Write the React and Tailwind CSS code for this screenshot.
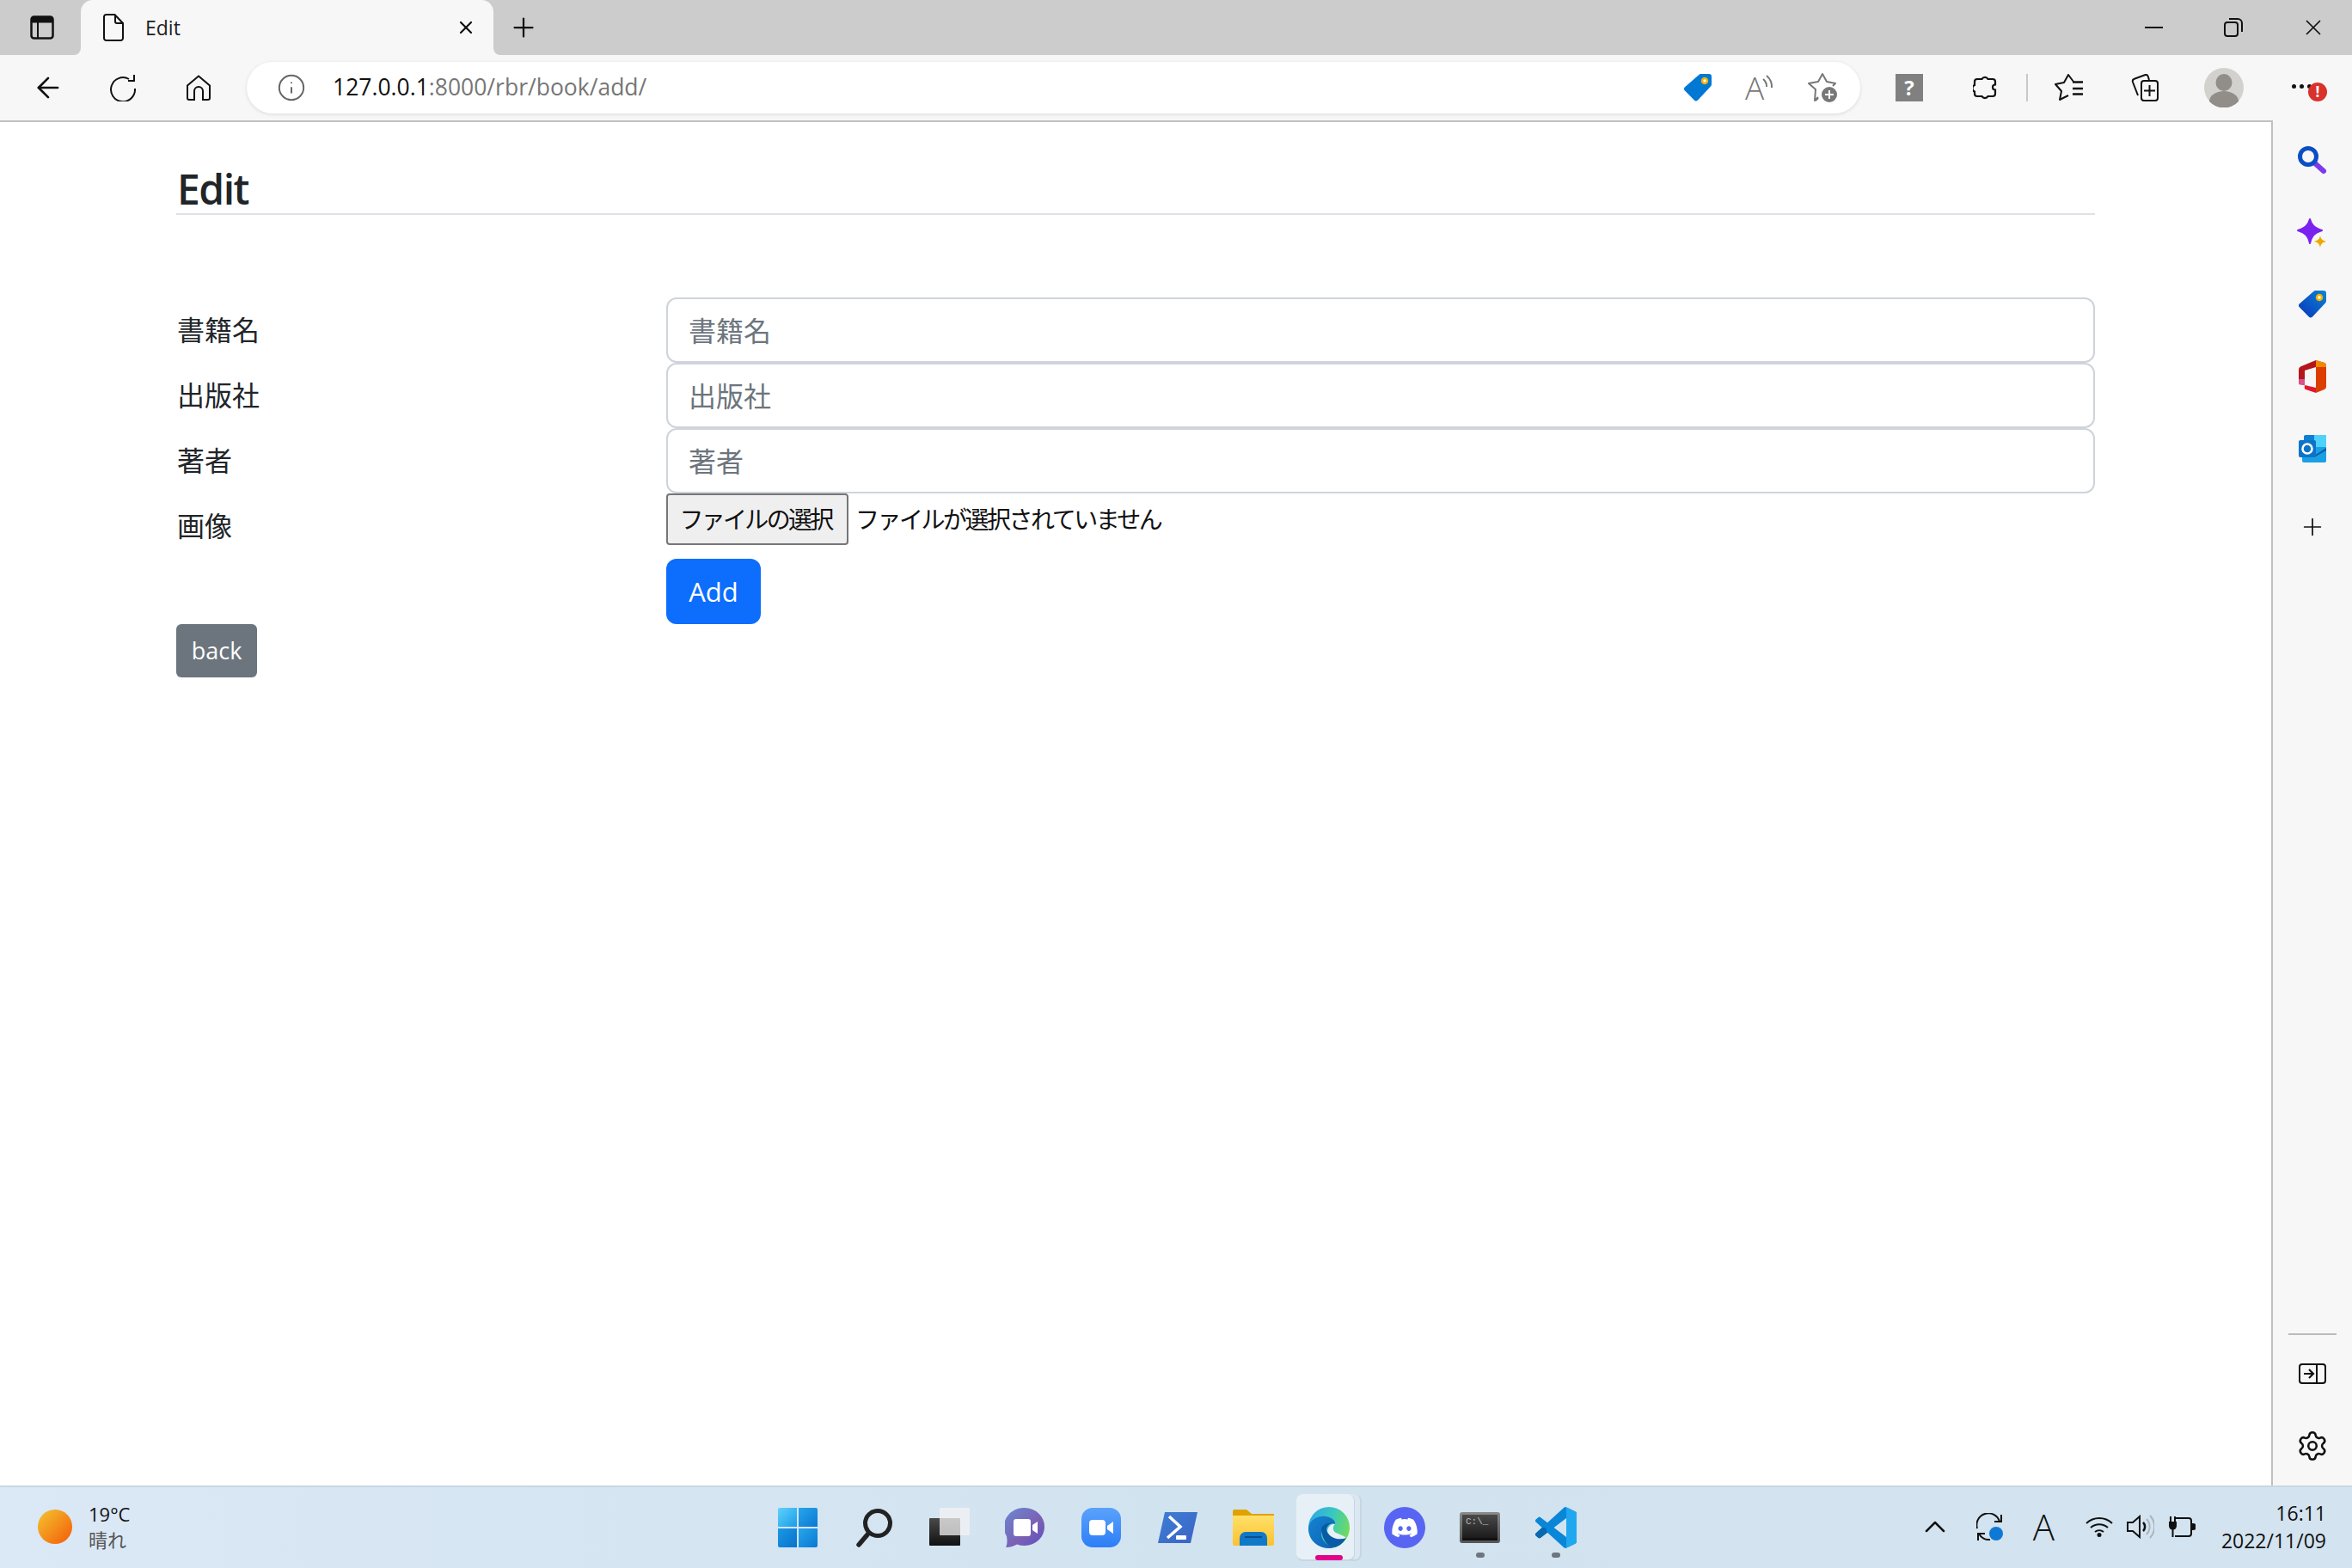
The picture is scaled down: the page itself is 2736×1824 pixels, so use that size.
import { ArrowLeft, Info, Plus, X, Settings, ChevronUp } from 'lucide-react';
import { FaDiscord } from 'react-icons/fa';

const FONT = "font-['Open_Sans','Noto_Sans_CJK_JP',sans-serif]";

function TabSidebarIcon() {
  return (
    <svg width="28" height="28" viewBox="0 0 28 28" className="ml-[35px]">
      <rect x="1.5" y="1.5" width="25" height="25" rx="3" fill="none" stroke="#111" strokeWidth="2.5" />
      <path d="M1.5 4.5a3 3 0 0 1 3-3h19a3 3 0 0 1 3 3v4h-25z" fill="#111" />
      <path d="M9 8v18" stroke="#111" strokeWidth="2" />
    </svg>
  );
}

function DocIcon() {
  return (
    <svg width="24" height="32" viewBox="0 0 24 32" fill="none" stroke="#111" strokeWidth="2" className="ml-[26px]">
      <path d="M3.5 1h10L23 11v17.500a2.500 2.500 0 0 1-2.500 2.500h-17A2.500 2.500 0 0 1 1 28.500v-25A2.500 2.500 0 0 1 3.500 1z" />
      <path d="M14 1v8a2 2 0 0 0 2 2h7" />
    </svg>
  );
}

function Refresh() {
  return (
    <svg width="32" height="32" viewBox="0 0 32 32" fill="none" stroke="#111" strokeWidth="2" className="ml-[52px]">
      <path d="M23 6A14 14 0 1 0 30 17" />
      <path d="M29 1v7h-7" />
    </svg>
  );
}

function Home() {
  return (
    <svg width="28" height="30" viewBox="0 0 28 30" fill="none" stroke="#111" strokeWidth="2" className="ml-[58px]">
      <path d="M14 1.500L27 12.500V27a2 2 0 0 1-2 2h-6V19a5 5 0 0 0-10 0v10H3a2 2 0 0 1-2-2V12.500z" />
    </svg>
  );
}

function PriceTag({ size = 32, sidebar = false }) {
  const id = sidebar ? 'tagb' : 'taga';
  return (
    <svg width={size} height={size} viewBox="0 0 32 32">
      <defs>
        <linearGradient id={id} x1="1" y1="0" x2="0" y2="1">
          <stop offset="0" stopColor={sidebar ? '#0a84d8' : '#0078d4'} />
          <stop offset="1" stopColor={sidebar ? '#0a35b8' : '#0078d4'} />
        </linearGradient>
      </defs>
      <path d="M20 0h9a3 3 0 0 1 3 3v9a4 4 0 0 1-1.200 2.800L16 30.500a3 3 0 0 1-4.200 0L1 19.500a3 3 0 0 1 0-4.200L17 1.200A4 4 0 0 1 20 0z" fill={`url(#${id})`} />
      <circle cx="24" cy="8" r="3" fill="#fff" stroke="#f2b200" strokeWidth="2.500" />
    </svg>
  );
}

function ReadAloud() {
  return (
    <div className="relative ml-[40px] w-[32px] h-[30px]">
      <span className="block -ml-px text-[37px] leading-[30px] font-light text-[#777]">A</span>
      <svg width="32" height="30" viewBox="0 0 32 30" fill="none" className="absolute left-0 top-0">
        <path d="M20 5a11 11 0 0 1 4 9M24 1a17 17 0 0 1 6 14" stroke="#777" strokeWidth="2" />
      </svg>
    </div>
  );
}

function StarAdd() {
  return (
    <svg width="34" height="34" viewBox="0 0 34 34" fill="none" className="ml-[40px]">
      <path d="M12 28l-4 4 1-13-8-7 11-2 5-9 5 9 10 2-3 3" stroke="#777" strokeWidth="2" strokeLinejoin="round" />
      <path d="M9 32l3-3" stroke="#777" strokeWidth="2" />
      <circle cx="25" cy="25" r="9" fill="#777" />
      <path d="M25 20v10M20 25h10" stroke="#fff" strokeWidth="2" />
    </svg>
  );
}

function PuzzleIcon() {
  return (
    <svg width="30" height="32" viewBox="0 0 30 32" fill="none" stroke="#111" strokeWidth="2.200" className="ml-[58px]">
      <path d="M5 6h5.500a4 4 0 0 1 7 0H23a3 3 0 0 1 3 3v3.500a3 3 0 0 0 0 6V23a3 3 0 0 1-3 3h-5.500a4 4 0 0 1-7 0H5a3 3 0 0 1-3-3v-2.500a4 4 0 0 1 0-7.500V9a3 3 0 0 1 3-3z" />
    </svg>
  );
}

function FavList() {
  return (
    <svg width="34" height="32" viewBox="0 0 34 32" fill="none" stroke="#111" strokeWidth="2" className="ml-[31px]">
      <path d="M22 9L16 1l-5 9-10 2 7 8-2 10 10-5" strokeLinejoin="round" />
      <path d="M21 9.500h12M21 17h12M21 23.500h12" strokeWidth="2.500" />
    </svg>
  );
}

function Collections() {
  return (
    <svg width="32" height="32" viewBox="0 0 32 32" fill="none" stroke="#111" strokeWidth="2" className="ml-[55px]">
      <path d="M8 25L2 9.500a3 3 0 0 1 1.800-3.800L16 1.200a3 3 0 0 1 3.800 1.800L21 7" />
      <rect x="12" y="8" width="19" height="23" rx="3" />
      <path d="M21.500 13v13M15 19.500h13" />
    </svg>
  );
}

function Avatar() {
  return (
    <svg width="46" height="46" viewBox="0 0 46 46" className="ml-[53px]">
      <circle cx="23" cy="23" r="23" fill="#d2d1cd" />
      <ellipse cx="23" cy="17" rx="9.500" ry="10" fill="#918e8a" />
      <path d="M6 39a17 12 0 0 1 34 0a23 23 0 0 1-34 0z" fill="#918e8a" />
    </svg>
  );
}

function MoreBadge() {
  return (
    <div className="relative ml-[56px] w-[26px] h-[6px] flex items-center gap-[4px] mb-[4px]">
      <span className="w-[5px] h-[5px] rounded-full bg-[#111]" />
      <span className="w-[5px] h-[5px] rounded-full bg-[#111]" />
      <span className="w-[5px] h-[5px] rounded-full bg-[#111]" />
      <span className="absolute left-[19px] top-[-1px] w-[22px] h-[22px] rounded-full bg-[#d9312b] text-white text-[17px] leading-[22px] text-center font-bold">!</span>
    </div>
  );
}

function SearchColor() {
  return (
    <svg width="34" height="32" viewBox="0 0 34 32" fill="none">
      <path d="M20 20l10 9" stroke="#7c3aed" strokeWidth="6" strokeLinecap="round" />
      <circle cx="12" cy="12" r="9.500" stroke="#0b4ec4" strokeWidth="5" />
    </svg>
  );
}

function Sparkle() {
  return (
    <svg width="36" height="34" viewBox="0 0 36 34">
      <path d="M15 1c2 7 5 10 14 13-9 3-12 6-14 15-2-9-5-12-14-15 9-3 12-6 14-13z" fill="#7a22f0" stroke="#7a22f0" strokeWidth="2" strokeLinejoin="round" />
      <path d="M27 20c.8 4 2 5 7 7-5 1-6 3-7 7-1-4-2-6-7-7 5-2 6.200-3 7-7z" fill="#f0a800" />
    </svg>
  );
}

function OfficeLogo() {
  return (
    <svg width="32" height="38" viewBox="0 0 32 38">
      <path d="M20 0L2 7.500Q0 8.500 0 11v17l7 1V12l13-4z" fill="#b5161b" />
      <path d="M20 0l10 3q2 .8 2 3v25q0 2-2 3l-10 4z" fill="#dc3e00" />
      <path d="M20 0l10 3q2 .8 2 3v2H20z" fill="#f08a00" />
      <path d="M0 22v6l7 1v-7z" fill="#d8528c" />
      <path d="M7 29l13 3v6L8 34q-2-1.500-1-5z" fill="#e6142d" />
    </svg>
  );
}

function OutlookLogo() {
  return (
    <svg width="32" height="32" viewBox="0 0 32 32">
      <rect x="6" y="0" width="26" height="24" rx="2" fill="#0f7fd4" />
      <rect x="18" y="0" width="14" height="14" fill="#4fd2fa" />
      <path d="M4 14l28 0v16a2 2 0 0 1-2 2H6a2 2 0 0 1-2-2z" fill="#1b9fe4" />
      <path d="M18 24l14-9v3l-14 8z" fill="#0a5fa8" />
      <rect x="0" y="6" width="20" height="20" rx="2" fill="#0c74c8" />
      <circle cx="10" cy="16" r="5.500" fill="none" stroke="#fff" strokeWidth="2.500" />
    </svg>
  );
}

function PanelIcon() {
  return (
    <svg width="32" height="24" viewBox="0 0 32 24" fill="none" stroke="#111" strokeWidth="2">
      <rect x="1" y="1" width="30" height="22" rx="3" />
      <path d="M21 1v22" />
      <path d="M6 12h11M12 7l5 5-5 5" strokeWidth="2.200" />
    </svg>
  );
}

function SunBall() {
  return (
    <svg width="40" height="40" viewBox="0 0 40 40" className="ml-[44px]">
      <defs>
        <linearGradient id="sun" x1="0" y1="0" x2="1" y2="1">
          <stop offset="0.100" stopColor="#f3bb2c" />
          <stop offset="0.900" stopColor="#f4650c" />
        </linearGradient>
      </defs>
      <circle cx="20" cy="20" r="20" fill="url(#sun)" />
    </svg>
  );
}

function WinLogo() {
  return (
    <svg width="46" height="46" viewBox="0 0 46 46">
      <defs>
        <linearGradient id="w1" x1="0" y1="0" x2="1" y2="1"><stop offset="0" stopColor="#5fd2fb" /><stop offset="1" stopColor="#1a9ce8" /></linearGradient>
        <linearGradient id="w2" x1="0" y1="0" x2="1" y2="1"><stop offset="0" stopColor="#28a6ea" /><stop offset="1" stopColor="#0a78d4" /></linearGradient>
        <linearGradient id="w3" x1="0" y1="0" x2="1" y2="1"><stop offset="0" stopColor="#1b98e6" /><stop offset="1" stopColor="#0772cb" /></linearGradient>
      </defs>
      <path d="M2 0h20v22H0V2a2 2 0 0 1 2-2z" fill="url(#w1)" />
      <path d="M24 0h20a2 2 0 0 1 2 2v20H24z" fill="url(#w2)" />
      <path d="M0 24h22v22H2a2 2 0 0 1-2-2z" fill="url(#w3)" />
      <path d="M24 24h22v20a2 2 0 0 1-2 2H24z" fill="url(#w2)" />
    </svg>
  );
}

function TaskSearch() {
  return (
    <svg width="42" height="46" viewBox="0 0 42 46" fill="none" stroke="#222" strokeLinecap="round">
      <circle cx="25" cy="18" r="14.500" strokeWidth="5" />
      <path d="M14 30L3 43" strokeWidth="5.500" />
    </svg>
  );
}

function TaskView() {
  return (
    <svg width="48" height="46" viewBox="0 0 48 46">
      <defs>
        <linearGradient id="tv" x1="0" y1="0" x2="0" y2="1"><stop offset="0" stopColor="#4a4a4a" /><stop offset="1" stopColor="#111" /></linearGradient>
      </defs>
      <rect x="0" y="12" width="36" height="32" rx="1" fill="url(#tv)" />
      <rect x="12" y="0" width="35" height="32" rx="1" fill="#f3f3f3" fillOpacity="0.75" />
    </svg>
  );
}

function TeamsChat() {
  return (
    <svg width="46" height="46" viewBox="0 0 46 46">
      <defs>
        <linearGradient id="tc" x1="0" y1="0" x2="1" y2="1"><stop offset="0" stopColor="#6a8ad0" /><stop offset="0.600" stopColor="#7b5fb5" /><stop offset="1" stopColor="#5a50c0" /></linearGradient>
      </defs>
      <path d="M23 0a23 22 0 0 1 0 44c-3 0-6-.500-9-1.500C10 45 5 46 1 46c1.500-3 2-7 1-13A23 22 0 0 1 23 0z" fill="url(#tc)" />
      <rect x="10" y="13" width="20" height="20" rx="3" fill="#fff" />
      <path d="M32 20l6-4v14l-6-4z" fill="#fff" />
    </svg>
  );
}

function ZoomApp() {
  return (
    <svg width="46" height="46" viewBox="0 0 46 46">
      <defs>
        <linearGradient id="zm" x1="0" y1="0" x2="0" y2="1"><stop offset="0" stopColor="#5aa2fb" /><stop offset="1" stopColor="#2d7ef7" /></linearGradient>
      </defs>
      <rect width="46" height="46" rx="13" fill="url(#zm)" />
      <rect x="9" y="14" width="19" height="18" rx="4" fill="#fff" />
      <path d="M30 21l7-5v14l-7-5z" fill="#fff" />
    </svg>
  );
}

function PowerShell() {
  return (
    <svg width="46" height="36" viewBox="0 0 46 36">
      <defs>
        <linearGradient id="ps" x1="0" y1="0" x2="1" y2="1"><stop offset="0" stopColor="#3d7fd6" /><stop offset="1" stopColor="#3c62c4" /></linearGradient>
      </defs>
      <path d="M8 0h38l-8 36H0z" fill="url(#ps)" />
      <path d="M13 5l13 12-15 13" fill="none" stroke="#fff" strokeWidth="3.500" />
      <rect x="21" y="27" width="12" height="5" rx="1" fill="#fff" />
    </svg>
  );
}

function Explorer() {
  return (
    <svg width="48" height="42" viewBox="0 0 48 42">
      <path d="M0 2a2 2 0 0 1 2-2h14l6 5h26v8H0z" fill="#e0a200" />
      <defs>
        <linearGradient id="fo" x1="0" y1="0" x2="0" y2="1"><stop offset="0" stopColor="#ffe06a" /><stop offset="1" stopColor="#fbc22e" /></linearGradient>
      </defs>
      <path d="M0 7h48v33a2 2 0 0 1-2 2H2a2 2 0 0 1-2-2z" fill="url(#fo)" />
      <path d="M8 42V33a7 7 0 0 1 7-7h18a7 7 0 0 1 7 7v9z" fill="#0f78c8" />
      <rect x="14" y="31" width="20" height="2" fill="#0a4e8a" />
    </svg>
  );
}

function EdgeLogo() {
  return (
    <svg width="48" height="48" viewBox="0 0 48 48">
      <defs>
        <linearGradient id="e1" x1="0" y1="0.300" x2="1" y2="0.600"><stop offset="0" stopColor="#2fa8e6" /><stop offset="0.500" stopColor="#38c8c0" /><stop offset="1" stopColor="#74dc58" /></linearGradient>
        <linearGradient id="e2" x1="0" y1="0" x2="1" y2="1"><stop offset="0" stopColor="#1583d0" /><stop offset="1" stopColor="#0e63b4" /></linearGradient>
      </defs>
      <circle cx="24" cy="24" r="24" fill="url(#e1)" />
      <path d="M0 25C1 15 11 10 20 11c8 1 12 6 11 9-7-2-15 2-16 10-1 8 7 16 15 17-3 1-5 1-6 1C10 48 0 38 0 25z" fill="url(#e2)" />
      <path d="M15 27c1 8 6 20 15 20 6-1 11-6 14-11-8 2-17 0-21-5-4-5-1-10 4-12-7-1-12 3-12 8z" fill="#0b5aa6" />
      <path d="M22 28c1-6 6-9 9-8-3 3-3 8 1 10 4 2 9 3 12 6-8 3-19 1-22-8z" fill="#e8f0f7" />
    </svg>
  );
}

function Discord() {
  return (
    <div className="w-[48px] h-[48px] rounded-full bg-[#5865f2] flex items-center justify-center text-white">
      <FaDiscord size={32} />
    </div>
  );
}

function Terminal() {
  return (
    <div className="w-[47px] h-[36px] rounded-[3px] bg-gradient-to-b from-[#8a8a8a] to-[#555] p-[3px]">
      <div className="w-full h-full bg-gradient-to-b from-[#4a4a4a] to-[#1c1c1c] px-[4px] pt-[2px] border-b-[3px] border-[#111]">
        <span className="block text-[#bbb] text-[11px] leading-[12px] font-['Liberation_Mono',monospace]">C:\_</span>
      </div>
    </div>
  );
}

function VsCode() {
  return (
    <svg width="48" height="48" viewBox="0 0 100 100">
      <path d="M96.5 10.800L75.900.900a6.200 6.200 0 0 0-7.100 1.200L29.300 38.100 12.200 25.100a4.200 4.200 0 0 0-5.300.200L1.400 30.400a4.200 4.200 0 0 0 0 6.200L16.200 50 1.400 63.400a4.200 4.200 0 0 0 0 6.200l5.500 5a4.200 4.200 0 0 0 5.300.200l17.100-13 39.500 36a6.200 6.200 0 0 0 7.100 1.200l20.600-9.900A6.200 6.200 0 0 0 100 83.400V16.600a6.200 6.200 0 0 0-3.500-5.800zM75 72.700L45 50l30-22.700z" fill="#0a86d8" />
      <path d="M16.200 50L1.400 63.400a4.200 4.200 0 0 0 0 6.200l5.500 5a4.200 4.200 0 0 0 5.300.200L29.300 61.800l-5-11.800z" fill="#0a68ae" />
      <path d="M75.900 99.100a6.200 6.200 0 0 1-7.100-1.200c2.300 2.300 6.200.700 6.200-2.600V4.700c0-3.300-3.900-4.900-6.200-2.600a6.200 6.200 0 0 1 7.100-1.200l20.600 9.900A6.200 6.200 0 0 1 100 16.600v66.800a6.200 6.200 0 0 1-3.500 5.800z" fill="#1fa8f0" />
    </svg>
  );
}

function SyncDot() {
  return (
    <svg width="32" height="32" viewBox="0 0 32 32" fill="none" stroke="#111" strokeWidth="2">
      <path d="M1 18a13 13 0 0 1 26-8" />
      <path d="M29 2v8h-8" />
      <path d="M16 31a13 13 0 0 1-13-7" />
      <path d="M2 32v-8h8" />
      <circle cx="23" cy="24" r="8" fill="#0f78d4" stroke="none" />
    </svg>
  );
}

function WifiIcon() {
  return (
    <svg width="32" height="24" viewBox="0 0 32 24" fill="none" stroke="#111" strokeWidth="2" className="ml-[36px]">
      <path d="M1 8a22 22 0 0 1 30 0M6 13a15 15 0 0 1 20 0M11 18a8 8 0 0 1 10 0" />
      <circle cx="16" cy="21.500" r="2.500" fill="#111" stroke="none" />
    </svg>
  );
}

function VolumeIcon() {
  return (
    <svg width="32" height="28" viewBox="0 0 32 28" fill="none" stroke="#111" strokeWidth="2" className="ml-[16px]">
      <path d="M1 9h6l8-7v24l-8-7H1z" />
      <path d="M19 9a7 7 0 0 1 0 10" strokeWidth="2.500" />
      <path d="M23 5a13 13 0 0 1 0 18M27 1a19 19 0 0 1 0 26" stroke="#a9b4be" />
    </svg>
  );
}

function BatteryPlug() {
  return (
    <svg width="32" height="24" viewBox="0 0 32 24" fill="none" stroke="#111" strokeWidth="2" className="ml-[16px]">
      <path d="M8 2h16a3 3 0 0 1 3 3v15a3 3 0 0 1-3 3H8" />
      <path d="M28 9h1a3 3 0 0 1 3 3 3 3 0 0 1-3 3h-1z" fill="#111" />
      <path d="M1 6h9v5a4 4 0 0 1-9 0z" fill="#111" stroke="none" />
      <path d="M3 0v6M8 0v6M5.500 13v11" />
    </svg>
  );
}

function Row({ label, placeholder }) {
  return (
    <div className="flex">
      <label className="w-[570px] pl-px h-[76px] flex items-center text-[32px] text-[#212529]">{label}</label>
      <input
        type="text"
        placeholder={placeholder}
        className="flex-1 h-[76px] px-[24px] border-2 border-[#ced4da] rounded-[12px] bg-white text-[32px] placeholder:text-[#6c757d] outline-none"
      />
    </div>
  );
}

export default function App() {
  return (
    <div className={`${FONT} w-[2736px] h-[1824px] flex flex-col overflow-hidden bg-white`}>
      {/* Title bar */}
      <div className="h-[64px] bg-[#cccccc] flex items-center">
        <TabSidebarIcon />
        <div className="relative ml-[31px] self-stretch w-[480px] bg-[#f7f7f7] rounded-t-[14px] flex items-center">
          <DocIcon />
          <span className="ml-[25px] text-[23px] text-[#222]">Edit</span>
          <X size={24} strokeWidth={2.2} className="ml-auto mr-[20px] text-[#111]" />
          <div className="absolute -left-[8px] bottom-0 w-[8px] h-[8px] bg-[#f7f7f7]">
            <div className="w-full h-full bg-[#cccccc] rounded-br-[8px]" />
          </div>
          <div className="absolute -right-[8px] bottom-0 w-[8px] h-[8px] bg-[#f7f7f7]">
            <div className="w-full h-full bg-[#cccccc] rounded-bl-[8px]" />
          </div>
        </div>
        <Plus size={36} strokeWidth={1.5} className="ml-[17px] text-[#111]" />
        <div className="ml-auto flex items-center mr-[30px]">
          <span className="w-[21px] h-[2px] bg-[#111]" />
          <svg width="22" height="22" viewBox="0 0 22 22" fill="none" stroke="#111" strokeWidth="2" className="ml-[71px]">
            <rect x="1" y="5" width="15" height="16" rx="3" />
            <path d="M6 1h10a5 5 0 0 1 5 5v10" />
          </svg>
          <X size={30} strokeWidth={1.4} className="ml-[67px] text-[#111]" />
        </div>
      </div>

      {/* Toolbar */}
      <div className="h-[76px] bg-[#f7f7f7] flex items-center">
        <ArrowLeft size={38} strokeWidth={1.7} className="ml-[37px] text-[#111]" />
        <Refresh />
        <Home />
        <div className="ml-[42px] w-[1877px] h-[60px] rounded-full bg-white shadow-[0_1px_4px_rgba(0,0,0,0.12)] flex items-center">
          <Info size={34} strokeWidth={1.4} className="ml-[35px] text-[#666]" />
          <span className="ml-[31px] text-[26.500px] text-[#111]">
            127.0.0.1<span className="text-[#767676]">:8000/rbr/book/add/</span>
          </span>
          <div className="ml-auto flex items-center mr-[27px]">
            <PriceTag />
            <ReadAloud />
            <StarAdd />
          </div>
        </div>
        <span className="ml-[41px] w-[32px] h-[32px] bg-[#808080] text-white text-[24px] leading-[32px] text-center font-bold">?</span>
        <PuzzleIcon />
        <span className="ml-[32px] w-[2px] h-[32px] bg-[#c8c8c8]" />
        <FavList />
        <Collections />
        <Avatar />
        <MoreBadge />
      </div>

      {/* Browser body */}
      <div className="flex-1 flex min-h-0">
        <main className="flex-1 border-t-2 border-r-2 border-[#c0c0c0] bg-white pl-[205px] pr-[205px] pt-[49px]">
          <h1 className="h-[57px] text-[48px] leading-[58px] font-semibold text-[#212529] tracking-[-1.500px] pl-px">Edit</h1>
          <div className="h-[2px] bg-[#dee2e6]" />
          <form className="mt-[96px]">
            <Row label="書籍名" placeholder="書籍名" />
            <Row label="出版社" placeholder="出版社" />
            <Row label="著者" placeholder="著者" />
            <div className="flex h-[76px]">
              <label className="w-[570px] pl-px h-[76px] flex items-center text-[32px] text-[#212529]">画像</label>
              <div className="flex items-start">
                <button type="button" className="w-[212px] h-[60px] pr-[4px] bg-[#efefef] border-2 border-[#767676] rounded-[4px] text-[28px] tracking-[-2.700px] text-[#111]">ファイルの選択</button>
                <span className="ml-[8px] h-[60px] flex items-center text-[28px] tracking-[-2.500px] text-[#111]">ファイルが選択されていません</span>
              </div>
            </div>
            <div className="pl-[570px]">
              <button type="button" className="block w-[110px] h-[76px] bg-[#0d6efd] rounded-[12px] text-white text-[31px]">Add</button>
            </div>
          </form>
          <button type="button" className="block w-[94px] h-[62px] bg-[#6c757d] rounded-[6px] text-white text-[27px]">back</button>
        </main>

        <aside className="w-[92px] bg-[#f7f7f7] flex flex-col items-center pt-[30px]">
          <SearchColor />
          <div className="mt-[52px]"><Sparkle /></div>
          <div className="mt-[50px]"><PriceTag sidebar /></div>
          <div className="mt-[49px]"><OfficeLogo /></div>
          <div className="mt-[49px]"><OutlookLogo /></div>
          <Plus size={32} strokeWidth={1.3} className="mt-[59px] text-[#111]" />
          <div className="mt-auto w-[56px] h-[2px] bg-[#bbbbbb]" />
          <div className="mt-[33px]"><PanelIcon /></div>
          <Settings size={38} strokeWidth={1.6} className="mt-[53px] mb-[27px] text-[#111]" />
        </aside>
      </div>

      {/* Taskbar */}
      <footer className="relative h-[96px] pb-[2px] bg-gradient-to-r from-[#dbe8f5] via-[#d2e3f0] to-[#d3e3ef] border-t-2 border-[#c8d6e5] flex items-center">
        <SunBall />
        <div className="ml-[19px] flex flex-col leading-none">
          <span className="text-[22px] leading-[30px] text-[#111]">19°C</span>
          <span className="text-[22px] leading-[30px] text-[#555]">晴れ</span>
        </div>

        <div className="absolute left-[905px] top-[22px] flex items-center h-[50px]">
          <WinLogo />
          <div className="ml-[45px]"><TaskSearch /></div>
          <div className="ml-[43px]"><TaskView /></div>
          <div className="ml-[40px]"><TeamsChat /></div>
          <div className="ml-[43px]"><ZoomApp /></div>
          <div className="ml-[43px]"><PowerShell /></div>
          <div className="ml-[41px]"><Explorer /></div>
          <div className="relative ml-[40px]">
            <div className="absolute -left-[14px] -top-[15px] w-[76px] h-[78px] rounded-[8px] bg-[#dbe7f1] border-r-2 border-b-2 border-[#c8d6e3]" />
            <div className="absolute -left-[14px] -top-[15px] w-[68px] h-[78px] rounded-[8px] bg-[#e8f0f7] border-b-2 border-r border-[#c8d6e3]" />
            <div className="relative"><EdgeLogo /></div>
            <div className="absolute left-[8px] top-[56px] w-[32px] h-[6px] rounded-full bg-[#e3008c]" />
          </div>
          <div className="ml-[40px]"><Discord /></div>
          <div className="relative ml-[40px]">
            <Terminal />
            <div className="absolute left-[19px] top-[47px] w-[10px] h-[6px] rounded-full bg-[#6b7680]" />
          </div>
          <div className="relative ml-[41px]">
            <VsCode />
            <div className="absolute left-[19px] top-[53px] w-[10px] h-[6px] rounded-full bg-[#6b7680]" />
          </div>
        </div>

        <div className="ml-auto flex items-center">
          <ChevronUp size={40} strokeWidth={1.5} className="text-[#111] mr-[28px]" />
          <SyncDot />
          <span className="ml-[34px] text-[42px] leading-none font-light text-[#111]">A</span>
          <WifiIcon />
          <VolumeIcon />
          <BatteryPlug />
          <div className="ml-[30px] mr-[30px] flex flex-col items-end text-[#111]">
            <span className="text-[23px] leading-[32px]">16:11</span>
            <span className="text-[23px] leading-[32px]">2022/11/09</span>
          </div>
        </div>
      </footer>
    </div>
  );
}
